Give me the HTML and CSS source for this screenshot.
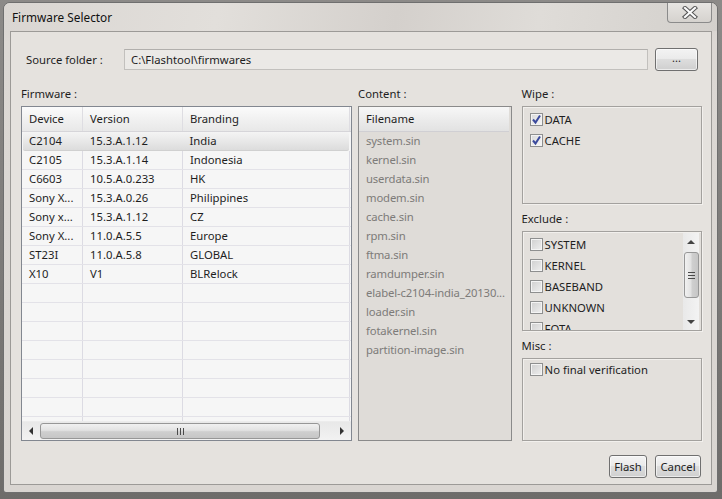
FILE: index.html
```html
<!DOCTYPE html>
<html lang="en">
<head>
    <meta charset="UTF-8">
    <title>Firmware Selector</title>
    <link rel="stylesheet" href="styles.css">
</head>
<body>
    <div class="window">
        <div class="titlebar">
            <span class="title">Firmware Selector</span>
            <div class="close-btn">
                <svg width="16" height="13" viewBox="0 0 16 13">
                    <path d="M3 2 L13 11 M13 2 L3 11" stroke="#555" stroke-width="4.2" stroke-linecap="square"/>
                    <path d="M3 2 L13 11 M13 2 L3 11" stroke="#fbfbfb" stroke-width="2.2" stroke-linecap="square"/>
                </svg>
            </div>
        </div>
        <div class="client">
            <div class="source-row">
                <span class="source-label">Source folder :</span>
                <div class="textfield">C:\Flashtool\firmwares</div>
                <div class="button browse">...</div>
            </div>

            <div class="main">
                <div class="col firmware-col">
                    <div class="label">Firmware :</div>
                    <div class="table">
                        <div class="thead">
                            <div class="th c-device">Device</div>
                            <div class="th c-version">Version</div>
                            <div class="th c-brand">Branding</div>
                        </div>
                        <div class="tbody">
                            <div class="tr selected"><div class="td c-device">C2104</div><div class="td c-version">15.3.A.1.12</div><div class="td c-brand">India</div></div>
                            <div class="tr"><div class="td c-device">C2105</div><div class="td c-version">15.3.A.1.14</div><div class="td c-brand">Indonesia</div></div>
                            <div class="tr"><div class="td c-device">C6603</div><div class="td c-version">10.5.A.0.233</div><div class="td c-brand">HK</div></div>
                            <div class="tr"><div class="td c-device">Sony X...</div><div class="td c-version">15.3.A.0.26</div><div class="td c-brand">Philippines</div></div>
                            <div class="tr"><div class="td c-device">Sony x...</div><div class="td c-version">15.3.A.1.12</div><div class="td c-brand">CZ</div></div>
                            <div class="tr"><div class="td c-device">Sony X...</div><div class="td c-version">11.0.A.5.5</div><div class="td c-brand">Europe</div></div>
                            <div class="tr"><div class="td c-device">ST23I</div><div class="td c-version">11.0.A.5.8</div><div class="td c-brand">GLOBAL</div></div>
                            <div class="tr"><div class="td c-device">X10</div><div class="td c-version">V1</div><div class="td c-brand">BLRelock</div></div>
                            <div class="tr"><div class="td c-device"></div><div class="td c-version"></div><div class="td c-brand"></div></div>
                            <div class="tr"><div class="td c-device"></div><div class="td c-version"></div><div class="td c-brand"></div></div>
                            <div class="tr"><div class="td c-device"></div><div class="td c-version"></div><div class="td c-brand"></div></div>
                            <div class="tr"><div class="td c-device"></div><div class="td c-version"></div><div class="td c-brand"></div></div>
                            <div class="tr"><div class="td c-device"></div><div class="td c-version"></div><div class="td c-brand"></div></div>
                            <div class="tr"><div class="td c-device"></div><div class="td c-version"></div><div class="td c-brand"></div></div>
                            <div class="tr"><div class="td c-device"></div><div class="td c-version"></div><div class="td c-brand"></div></div>
                            <div class="tr"><div class="td c-device"></div><div class="td c-version"></div><div class="td c-brand"></div></div>
                        </div>
                        <div class="hscroll">
                            <div class="arrow-btn"><span class="tri tri-left"></span></div>
                            <div class="hthumb"><span class="grip"></span></div>
                            <div class="htrack"></div>
                            <div class="arrow-btn"><span class="tri tri-right"></span></div>
                        </div>
                    </div>
                </div>

                <div class="col content-col">
                    <div class="label">Content :</div>
                    <div class="list">
                        <div class="list-head">Filename</div>
                        <div class="list-item">system.sin</div>
                        <div class="list-item">kernel.sin</div>
                        <div class="list-item">userdata.sin</div>
                        <div class="list-item">modem.sin</div>
                        <div class="list-item">cache.sin</div>
                        <div class="list-item">rpm.sin</div>
                        <div class="list-item">ftma.sin</div>
                        <div class="list-item">ramdumper.sin</div>
                        <div class="list-item">elabel-c2104-india_20130...</div>
                        <div class="list-item">loader.sin</div>
                        <div class="list-item">fotakernel.sin</div>
                        <div class="list-item">partition-image.sin</div>
                    </div>
                </div>

                <div class="col options-col">
                    <div class="label">Wipe :</div>
                    <div class="group wipe">
                        <div class="check"><span class="cb checked"><svg width="11" height="11" viewBox="0 0 11 11"><path d="M2 5.5 L4.5 8.5 L9 1.5" fill="none" stroke="#3b4a9c" stroke-width="2"/></svg></span>DATA</div>
                        <div class="check"><span class="cb checked"><svg width="11" height="11" viewBox="0 0 11 11"><path d="M2 5.5 L4.5 8.5 L9 1.5" fill="none" stroke="#3b4a9c" stroke-width="2"/></svg></span>CACHE</div>
                    </div>

                    <div class="label label-gap">Exclude :</div>
                    <div class="group exclude">
                        <div class="exclude-items">
                            <div class="check"><span class="cb"></span>SYSTEM</div>
                            <div class="check"><span class="cb"></span>KERNEL</div>
                            <div class="check"><span class="cb"></span>BASEBAND</div>
                            <div class="check"><span class="cb"></span>UNKNOWN</div>
                            <div class="check"><span class="cb"></span>FOTA</div>
                        </div>
                        <div class="vscroll">
                            <div class="varrow"><span class="tri tri-up"></span></div>
                            <div class="vgap"></div>
                            <div class="vthumb"><span class="vgrip"></span></div>
                            <div class="vtrack"></div>
                            <div class="varrow"><span class="tri tri-down"></span></div>
                        </div>
                    </div>

                    <div class="label label-gap">Misc :</div>
                    <div class="group misc">
                        <div class="check"><span class="cb"></span>No final verification</div>
                    </div>
                </div>
            </div>

            <div class="buttons">
                <div class="button flash">Flash</div>
                <div class="button cancel">Cancel</div>
            </div>
        </div>
    </div>
</body>
</html>
```

FILE: styles.css
```css
body {
    margin: 0;
    width: 722px;
    height: 499px;
    overflow: hidden;
    background: linear-gradient(to bottom, #8c8a88, #6e6c6a);
    font-family: "Segoe UI", "Noto Sans", "Liberation Sans", sans-serif;
    font-size: 11.3px;
    color: #1e1e1e;
}

.window {
    box-sizing: border-box;
    margin: 2px 0 0 3px;
    width: 715px;
    height: 491px;
    border: 1px solid #6f6f6f;
    border-radius: 7px 7px 3px 3px;
    background: linear-gradient(to bottom, #d6d2ce, #dcd8d4 40px, #d9d5d1);
    display: flex;
    flex-direction: column;
}

.titlebar {
    height: 28px;
    display: flex;
    align-items: flex-start;
    justify-content: space-between;
    background: linear-gradient(100deg, #dad6d2 0%, #e2dfdb 30%, #d4d0cc 55%, #dfdcd8 75%, #d3d0cc 100%);
    border-radius: 6px 6px 0 0;
}

.title {
    margin: 6px 0 0 8px;
    font-size: 11.8px;
    color: #111;
}

.close-btn {
    box-sizing: border-box;
    width: 45px;
    height: 20px;
    margin-right: 5px;
    border: 1px solid #8b8b8b;
    border-top: none;
    border-radius: 0 0 4px 4px;
    background: linear-gradient(to bottom, #e7e5e2, #d5d2ce);
    display: flex;
    align-items: center;
    justify-content: center;
}

.client {
    box-sizing: border-box;
    flex: 1;
    margin: 0 5px 7px 6px;
    border: 1px solid #9c9a97;
    background: #e5e2de;
    display: flex;
    flex-direction: column;
}

/* source folder row */
.source-row {
    display: flex;
    align-items: center;
    height: 23px;
    margin-top: 16px;
    padding-left: 15px;
}

.source-label {
    width: 98px;
}

.textfield {
    box-sizing: border-box;
    width: 524px;
    height: 21px;
    line-height: 19px;
    padding-left: 6px;
    border: 1px solid #c2c0bd;
    border-top-color: #b1afac;
    background: #ebe9e6;
}

.button {
    box-sizing: border-box;
    height: 23px;
    line-height: 21px;
    text-align: center;
    border: 1px solid #707070;
    border-radius: 3px;
    background: linear-gradient(to bottom, #f3f3f3 0%, #ebebeb 45%, #dddddd 50%, #cfcfcf 100%);
    box-shadow: inset 0 0 0 1px rgba(255, 255, 255, 0.6);
}

.browse {
    width: 43px;
    margin-left: 7px;
    font-size: 11px;
    line-height: 18px;
}

/* three columns */
.main {
    display: flex;
    gap: 6px;
    height: 354px;
    margin-top: 16px;
    padding: 0 9px 0 10px;
}

.col {
    display: flex;
    flex-direction: column;
}

.label {
    height: 19px;
    line-height: 13px;
}

.label-gap {
    height: 23px;
    line-height: 21px;
    margin-top: 4px;
}

.options-col .label-gap:last-of-type {
    height: 22px;
}

.firmware-col {
    width: 331px;
}

.content-col {
    width: 154px;
}

.options-col {
    width: 181px;
    margin-left: 4px;
}

/* firmware table */
.table {
    box-sizing: border-box;
    flex: 1;
    border: 1px solid #828790;
    background: #f6f6f6;
    display: flex;
    flex-direction: column;
    overflow: hidden;
}

.thead {
    display: flex;
    height: 24px;
    flex-shrink: 0;
    background: linear-gradient(to bottom, #fbfbfb, #f1f1f1 50%, #e8e8e8);
    border-bottom: 1px solid #d6d5d9;
}

.th {
    box-sizing: border-box;
    line-height: 24px;
    padding-left: 7px;
    border-right: 1px solid #dedde2;
}

.c-device {
    width: 61px;
}

.c-version {
    width: 100px;
}

.c-brand {
    width: 167px;
}

.tbody {
    flex: 1;
    overflow: hidden;
}

.tr {
    display: flex;
    height: 19px;
    border-bottom: 1px solid #e3e2e8;
    box-sizing: border-box;
}

.td {
    box-sizing: border-box;
    line-height: 18px;
    padding-left: 7px;
    border-right: 1px solid #dcdbe3;
    white-space: nowrap;
}

.tr.selected {
    margin: 0 2px 0 1px;
    border-radius: 2px;
    background: linear-gradient(to bottom, #f4f4f4, #e6e6e6 60%, #dcdcdc);
    border-bottom-color: #d0d0d0;
}

.tr.selected .td {
    border-right-color: transparent;
}

.tr.selected .c-device {
    width: 60px;
    padding-left: 6px;
}

/* horizontal scrollbar */
.hscroll {
    display: flex;
    height: 18px;
    flex-shrink: 0;
    align-items: center;
    background: linear-gradient(to bottom, #e8e8e8, #f2f2f2);
    border-top: 1px solid #ececec;
}

.arrow-btn {
    width: 18px;
    height: 17px;
    display: flex;
    align-items: center;
    justify-content: center;
}

.hthumb {
    box-sizing: border-box;
    width: 280px;
    height: 16px;
    border: 1px solid #979797;
    border-radius: 3px;
    background: linear-gradient(to bottom, #f1f1f1, #e2e2e2 45%, #cfcfcf 55%, #c6c6c6);
    display: flex;
    align-items: center;
    justify-content: center;
}

.htrack {
    flex: 1;
}

.grip {
    width: 7px;
    height: 7px;
    background: repeating-linear-gradient(to right, #4a4a4a 0 1px, transparent 1px 3px);
}

.tri {
    width: 0;
    height: 0;
    border: 4px solid transparent;
}

.tri-left {
    border-right-color: #333;
    border-left-width: 0;
}

.tri-right {
    border-left-color: #333;
    border-right-width: 0;
}

.tri-up {
    border-bottom-color: #444;
    border-width: 0 4px 4px;
}

.tri-down {
    border-top-color: #444;
    border-width: 4px 4px 0;
}

/* content list */
.list {
    box-sizing: border-box;
    flex: 1;
    border: 1px solid #8a8a8a;
    background: #dfdcd8;
    overflow: hidden;
}

.list-head {
    height: 24px;
    line-height: 24px;
    padding-left: 7px;
    margin-right: 2px;
    background: linear-gradient(to bottom, #f7f7f7, #ececec 50%, #e2e2e2);
    border-bottom: 1px solid #d0cfd3;
}

.list-item {
    height: 19px;
    line-height: 17px;
    padding-left: 7px;
    color: #7d7b79;
    letter-spacing: -0.15px;
    white-space: nowrap;
}

/* option groups */
.group {
    box-sizing: border-box;
    border: 1px solid #a3a19e;
    box-shadow: inset 1px 1px 0 #f2f0ed, 1px 1px 0 #f2f0ed;
    background: #e3e0dc;
    padding: 2px 0 0 7px;
}

.wipe {
    height: 98px;
}

.exclude {
    height: 100px;
    display: flex;
    padding-right: 2px;
    overflow: hidden;
}

.exclude-items {
    flex: 1;
    overflow: hidden;
}

.misc {
    flex: 1;
    padding-top: 0;
}

.check {
    display: flex;
    align-items: center;
    height: 21px;
    white-space: nowrap;
}

.cb {
    box-sizing: border-box;
    width: 13px;
    height: 13px;
    margin-right: 2px;
    border: 1px solid #8e8f8f;
    background: linear-gradient(135deg, #cfcfcf, #efefef);
    box-shadow: inset 0 0 0 1px #f4f4f4;
    display: flex;
    align-items: center;
    justify-content: center;
}

.cb.checked {
    background: linear-gradient(135deg, #d9d9d9, #f7f7f7);
}

/* vertical scrollbar */
.vscroll {
    width: 16px;
    margin-top: -1px;
    display: flex;
    flex-direction: column;
    align-items: center;
    background: linear-gradient(to right, #e9e9e9, #f3f3f3);
}

.varrow {
    height: 17px;
    width: 16px;
    display: flex;
    align-items: center;
    justify-content: center;
}

.vgap {
    height: 2px;
}

.vthumb {
    box-sizing: border-box;
    width: 15px;
    height: 46px;
    border: 1px solid #979797;
    border-radius: 3px;
    background: linear-gradient(to right, #f1f1f1, #e2e2e2 45%, #cfcfcf 55%, #c6c6c6);
    display: flex;
    align-items: center;
    justify-content: center;
}

.vgrip {
    width: 7px;
    height: 7px;
    background: repeating-linear-gradient(to bottom, #4a4a4a 0 1px, transparent 1px 3px);
}

.vtrack {
    flex: 1;
}

/* dialog buttons */
.buttons {
    display: flex;
    justify-content: flex-end;
    gap: 8px;
    margin-top: 14px;
    padding-right: 10px;
}

.flash {
    width: 38px;
}

.cancel {
    width: 46px;
}
```
